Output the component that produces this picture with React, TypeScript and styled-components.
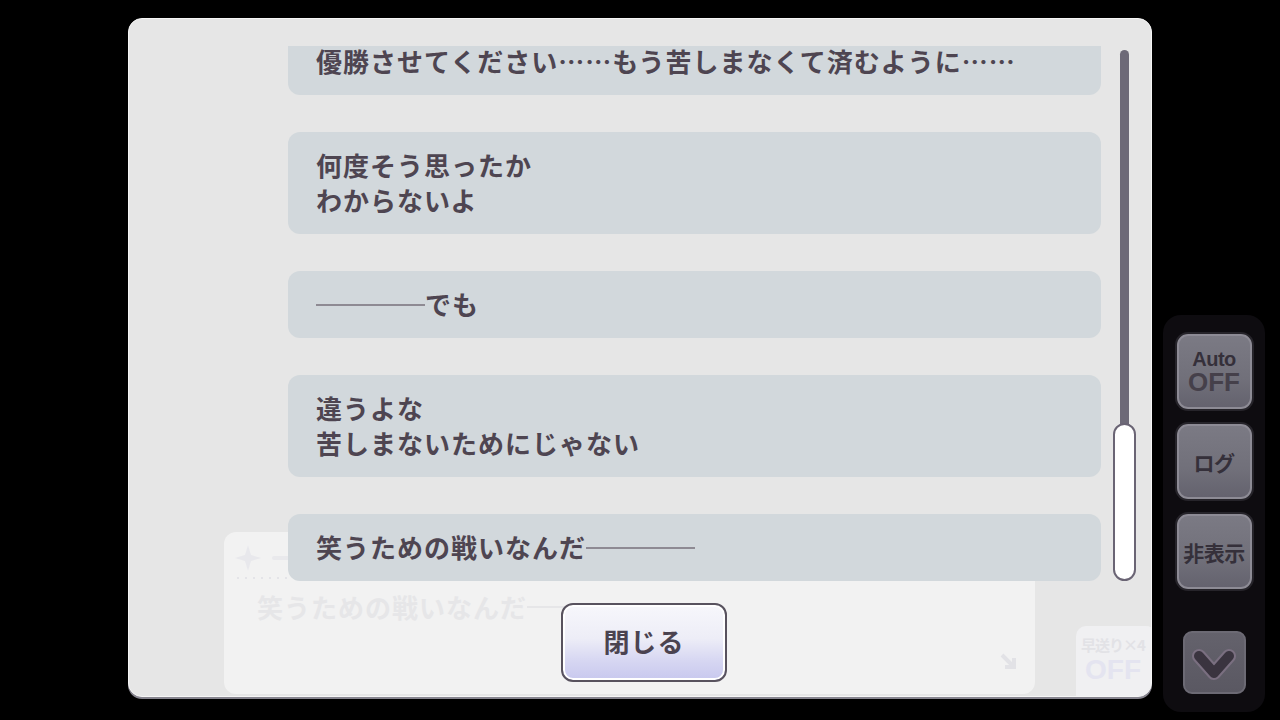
import React from 'react';
import styled, { createGlobalStyle } from 'styled-components';

const GlobalStyle = createGlobalStyle`
  html, body {
    margin: 0;
    padding: 0;
    background: #000;
  }
  body {
    font-family: "Noto Sans CJK JP", "Noto Sans", sans-serif;
  }
`;

type Line = { text: string; dash?: 'before' | 'after' };

const messages: Line[][] = [
  [{ text: '優勝させてください……もう苦しまなくて済むように……' }],
  [{ text: '何度そう思ったか' }, { text: 'わからないよ' }],
  [{ text: 'でも', dash: 'before' }],
  [{ text: '違うよな' }, { text: '苦しまないためにじゃない' }],
  [{ text: '笑うための戦いなんだ', dash: 'after' }],
];

export default function App() {
  return (
    <>
      <GlobalStyle />
      <Stage>
        <SidePanel>
          <SideButton>
            <AutoLabel>Auto</AutoLabel>
            <AutoState>OFF</AutoState>
          </SideButton>
          <SideButton>
            <SideLabel>ログ</SideLabel>
          </SideButton>
          <SideButton>
            <SideLabel>非表示</SideLabel>
          </SideButton>
          <ArrowButton>
            <svg width="44" height="34" viewBox="0 0 44 34">
              <polyline
                points="7,8 22,25 37,8"
                fill="none"
                stroke="#7a6f80"
                strokeWidth="14"
                strokeLinecap="round"
                strokeLinejoin="round"
              />
              <polyline
                points="7,8 22,25 37,8"
                fill="none"
                stroke="#3a343f"
                strokeWidth="10"
                strokeLinecap="round"
                strokeLinejoin="round"
              />
            </svg>
          </ArrowButton>
        </SidePanel>

        <LogPanel>
          <Ghost>
            <GhostDialog>
              <GhostName>
                <svg width="28" height="28" viewBox="0 0 28 28">
                  <path
                    d="M14 1 L17 11 L27 14 L17 17 L14 27 L11 17 L1 14 L11 11 Z"
                    fill="#e8e8ec"
                  />
                </svg>
                <GhostNameBar />
              </GhostName>
              <GhostDots />
              <GhostText>
                笑うための戦いなんだ<GhostDash />
              </GhostText>
              <GhostArrow>
                <svg width="18" height="18" viewBox="0 0 18 18">
                  <path d="M2 2 L14 14 M14 5 L14 14 L5 14" fill="none" stroke="#e2e2e6" strokeWidth="4" />
                </svg>
              </GhostArrow>
            </GhostDialog>
            <GhostFast>
              <GhostFastLabel>早送り×4</GhostFastLabel>
              <GhostFastState>OFF</GhostFastState>
            </GhostFast>
          </Ghost>

          <Body>
            <Viewport>
              {messages.map((lines, i) => (
                <Bubble key={i}>
                  {lines.map((line, j) => (
                    <TextLine key={j}>
                      {line.dash === 'before' && <Dash />}
                      {line.text}
                      {line.dash === 'after' && <Dash />}
                    </TextLine>
                  ))}
                </Bubble>
              ))}
            </Viewport>
            <Scrollbar>
              <Track />
              <Thumb />
            </Scrollbar>
          </Body>

          <Footer>
            <CloseButton>閉じる</CloseButton>
          </Footer>
        </LogPanel>
      </Stage>
    </>
  );
}

const Stage = styled.div`
  position: relative;
  width: 1280px;
  height: 720px;
  background: #000;
  overflow: hidden;
  display: flex;
  justify-content: flex-end;
  align-items: flex-end;
  padding: 0 15px 8px 0;
  box-sizing: border-box;
`;

const SidePanel = styled.div`
  width: 102px;
  height: 397px;
  background: #0e0c10;
  border-radius: 18px;
  display: flex;
  flex-direction: column;
  align-items: center;
  padding: 19px 0 18px;
  gap: 15px;
  box-sizing: border-box;
`;

const SideButton = styled.div`
  width: 75px;
  height: 75px;
  box-sizing: border-box;
  border-radius: 11px;
  border: 2px solid #8d8b95;
  box-shadow: 0 0 0 2px #26242a;
  background: linear-gradient(180deg, #7b7a84 0%, #71707a 60%, #64626e 100%);
  display: flex;
  flex-direction: column;
  align-items: center;
  justify-content: center;
  color: #35303a;
  font-weight: 700;
`;

const AutoLabel = styled.div`
  font-family: "Liberation Sans", Arial, sans-serif;
  font-size: 20px;
  line-height: 21px;
  letter-spacing: -0.5px;
`;

const AutoState = styled.div`
  font-family: "Liberation Sans", Arial, sans-serif;
  font-size: 26px;
  line-height: 25px;
  color: #45404a;
`;

const SideLabel = styled.div`
  font-size: 21px;
  line-height: 26px;
  letter-spacing: -0.5px;
`;

const ArrowButton = styled.div`
  margin-top: auto;
  width: 63px;
  height: 63px;
  box-sizing: border-box;
  border-radius: 9px;
  border: 2px solid #6c6a74;
  background: linear-gradient(180deg, #64626c 0%, #5a5862 100%);
  display: flex;
  align-items: center;
  justify-content: center;
  padding-top: 4px;
`;

const LogPanel = styled.div`
  position: absolute;
  left: 128px;
  top: 18px;
  width: 1024px;
  height: 679px;
  box-sizing: border-box;
  background: #e6e6e6;
  border: 1px solid #f6f6f6;
  border-radius: 14px;
  box-shadow: 0 2px 0 #86848e;
  overflow: hidden;
  display: flex;
  flex-direction: column;
  padding: 27px 15px 0 159px;
`;

const Ghost = styled.div`
  position: absolute;
  inset: 0;
  z-index: 0;
`;

const GhostDialog = styled.div`
  position: absolute;
  left: 95px;
  top: 513px;
  width: 811px;
  height: 162px;
  background: #f2f2f2;
  border-radius: 12px;
`;

const GhostName = styled.div`
  display: flex;
  align-items: center;
  gap: 10px;
  padding: 12px 0 0 10px;
`;

const GhostNameBar = styled.div`
  width: 18px;
  height: 4px;
  background: #e9e9ec;
  border-radius: 2px;
`;

const GhostDots = styled.div`
  width: 120px;
  height: 2px;
  margin: 5px 0 0 10px;
  background-image: radial-gradient(circle, #e4e4e8 1px, transparent 1.2px);
  background-size: 8px 2px;
`;

const GhostText = styled.div`
  display: flex;
  align-items: center;
  padding: 10px 0 0 33px;
  font-size: 26px;
  font-weight: 700;
  letter-spacing: 1px;
  line-height: 35px;
  color: #e6e6e8;
`;

const GhostDash = styled.span`
  display: inline-block;
  width: 110px;
  height: 2px;
  background: #e6e6e8;
`;

const GhostArrow = styled.div`
  position: absolute;
  right: 17px;
  bottom: 18px;
`;

const GhostFast = styled.div`
  position: absolute;
  left: 947px;
  top: 607px;
  width: 80px;
  height: 84px;
  background: #f0f0f2;
  border-radius: 10px;
  display: flex;
  flex-direction: column;
  align-items: center;
  padding-top: 10px;
  box-sizing: border-box;
`;

const GhostFastLabel = styled.div`
  font-size: 15px;
  font-weight: 700;
  line-height: 18px;
  color: #e2e2e6;
  letter-spacing: -1px;
  margin-left: -6px;
`;

const GhostFastState = styled.div`
  font-family: "Liberation Sans", Arial, sans-serif;
  font-size: 28px;
  font-weight: 700;
  color: #e4e4f0;
  margin-left: -6px;
`;

const Body = styled.div`
  position: relative;
  z-index: 1;
  display: flex;
  gap: 12px;
  height: 535px;
`;

const Viewport = styled.div`
  flex: 1;
  overflow: hidden;
  display: flex;
  flex-direction: column;
  justify-content: flex-end;
  gap: 37px;
`;

const Bubble = styled.div`
  flex-shrink: 0;
  background: #d2d8dc;
  border-radius: 12px;
  padding: 15px 28px 17px;
`;

const TextLine = styled.div`
  display: flex;
  align-items: center;
  font-size: 26px;
  font-weight: 700;
  line-height: 35px;
  letter-spacing: 1px;
  color: #4e4551;
  white-space: nowrap;
`;

const Dash = styled.span`
  display: inline-block;
  width: 109px;
  height: 2px;
  margin-top: 2px;
  background: #8e8a93;
`;

const Scrollbar = styled.div`
  width: 23px;
  display: flex;
  flex-direction: column;
  align-items: center;
  padding-top: 4px;
`;

const Track = styled.div`
  flex: 1;
  width: 9px;
  margin-bottom: -4px;
  background: #6d6977;
  border-radius: 5px 5px 0 0;
`;

const Thumb = styled.div`
  position: relative;
  width: 23px;
  height: 158px;
  box-sizing: border-box;
  background: #fff;
  border: 2px solid #6a6474;
  border-radius: 12px;
`;

const Footer = styled.div`
  position: relative;
  z-index: 1;
  display: flex;
  justify-content: center;
  padding: 22px 0 0 0;
  margin-left: -136px;
`;

const CloseButton = styled.div`
  width: 166px;
  height: 79px;
  box-sizing: border-box;
  border: 2px solid #58525e;
  border-radius: 12px;
  box-shadow: inset 0 0 0 2px #ffffff;
  background: linear-gradient(180deg, #f7f7fb 0%, #ededf7 45%, #d6d6f2 75%, #c8c8ee 100%);
  display: flex;
  align-items: center;
  justify-content: center;
  padding-bottom: 4px;
  font-size: 26px;
  font-weight: 700;
  color: #4b4350;
  letter-spacing: 1px;
`;
